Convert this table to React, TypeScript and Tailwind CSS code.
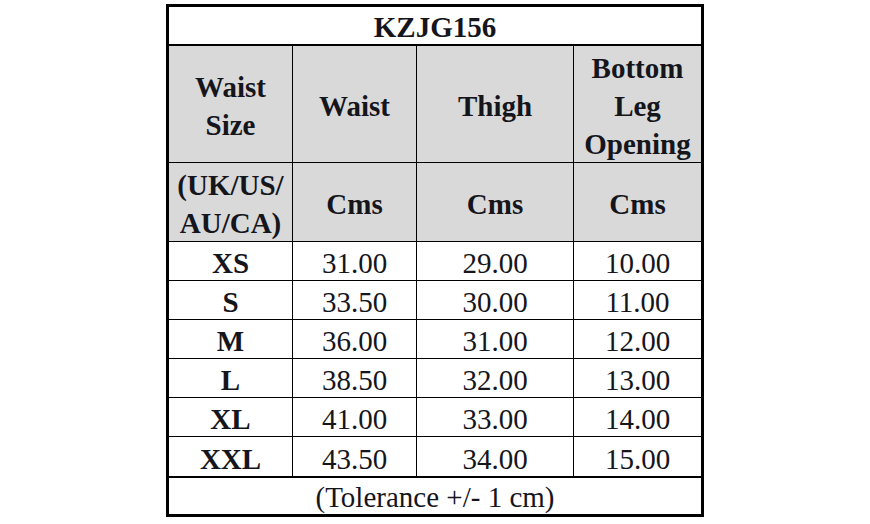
const sizes: [string, string, string, string][] = [
  ["XS", "31.00", "29.00", "10.00"],
  ["S", "33.50", "30.00", "11.00"],
  ["M", "36.00", "31.00", "12.00"],
  ["L", "38.50", "32.00", "13.00"],
  ["XL", "41.00", "33.00", "14.00"],
  ["XXL", "43.50", "34.00", "15.00"],
];

const colWidths = ["w-[124px] border-r", "w-[124px] border-r", "w-[157px] border-r", "flex-1"];

function Row({
  cells,
  className,
  header,
}: {
  cells: React.ReactNode[];
  className: string;
  header?: boolean;
}) {
  return (
    <div className={`flex border-black ${className}`}>
      {cells.map((c, i) => (
        <div
          key={i}
          className={`${colWidths[i]} border-black flex items-center justify-center text-center pt-1 leading-[38px] ${
            header || i === 0 ? "font-bold" : "font-normal"
          } ${header ? "bg-[#d9d9d9]" : ""}`}
        >
          {c}
        </div>
      ))}
    </div>
  );
}

export default function App() {
  return (
    <div className="w-[870px] h-[524px] bg-white pt-[4px] font-['Liberation_Serif',serif] text-[29px] text-[#15151c]">
      <div className="mx-auto w-[538px] border-[3px] border-black">
        <div className="h-[39px] border-b-2 border-black flex items-center justify-center font-bold pt-1">
          KZJG156
        </div>
        <Row
          header
          className="h-[117px] border-b"
          cells={[
            <>
              Waist
              <br />
              Size
            </>,
            "Waist",
            "Thigh",
            <>
              Bottom
              <br />
              Leg
              <br />
              Opening
            </>,
          ]}
        />
        <Row
          header
          className="h-[79px] border-b"
          cells={[
            <>
              (UK/US/
              <br />
              AU/CA)
            </>,
            "Cms",
            "Cms",
            "Cms",
          ]}
        />
        {sizes.map((r, i) => (
          <Row key={r[0]} className={`h-[39px] ${i < sizes.length - 1 ? "border-b" : ""}`} cells={r} />
        ))}
        <div className="h-[38px] border-t-2 border-black flex items-center justify-center pt-1">
          (Tolerance +/- 1 cm)
        </div>
      </div>
    </div>
  );
}
